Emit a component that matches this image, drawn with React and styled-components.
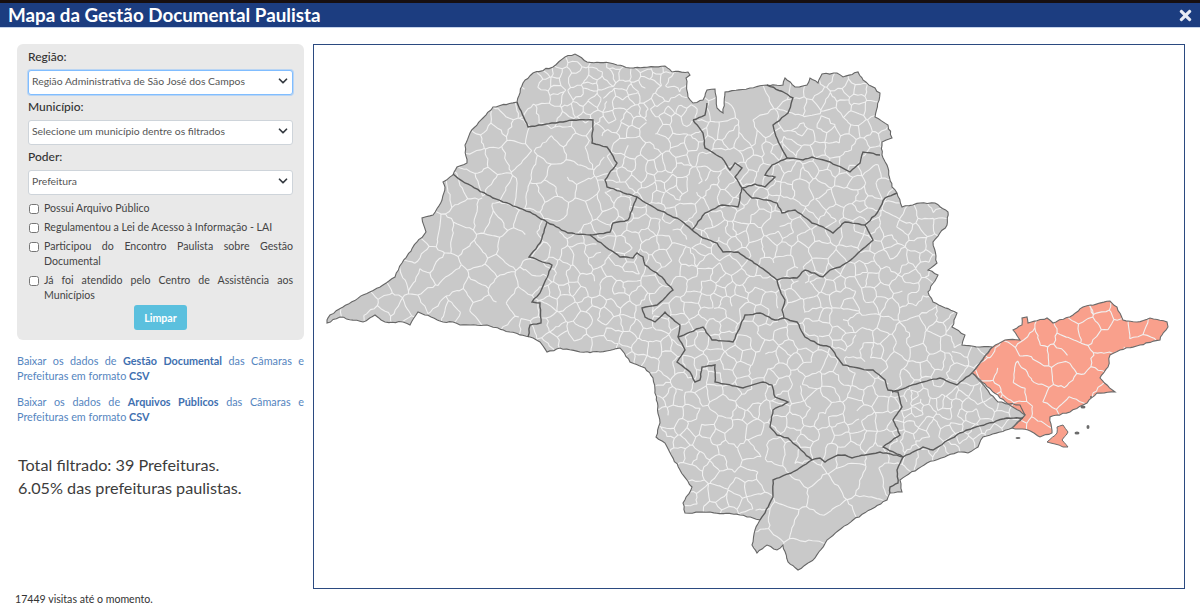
import React from 'react'
import styled, { createGlobalStyle } from 'styled-components'
import { FaTimes } from 'react-icons/fa'
import { ChevronDown } from 'lucide-react'

const GlobalStyle = createGlobalStyle`
  html, body { margin: 0; padding: 0; background: #fff; }
  body { font-family: Lato, "Open Sans", sans-serif; color: #333; }
`

// traced by hand, page coordinates
const STATE = [[327,320],[330,315],[343,307],[363,295],[383,285],[395,277],[402,263],[417,242],[426,232],[422,218],[433,215],[442,200],[445,187],[443,182],[453,175],[457,167],[467,163],[465,145],[470,133],[483,118],[493,107],[517,102],[523,83],[533,73],[553,67],[565,57],[575,54],[587,62],[610,63],[630,68],[665,66],[672,72],[688,72],[690,75],[686,78],[688,97],[693,103],[703,100],[707,90],[715,89],[717,108],[723,113],[725,92],[750,88],[767,85],[783,85],[785,78],[795,87],[807,85],[810,78],[818,83],[822,74],[837,73],[843,77],[858,72],[863,80],[880,93],[875,117],[888,125],[892,138],[882,142],[882,155],[888,168],[892,187],[897,193],[902,207],[920,203],[935,203],[948,212],[947,225],[933,242],[937,263],[928,270],[938,275],[928,292],[933,302],[957,313],[952,327],[965,335],[962,345],[980,347],[992,347],[972,373],[998,402],[1020,405],[1025,415],[1012,428],[983,437],[978,447],[968,453],[958,452],[927,463],[900,480],[902,492],[890,493],[887,500],[853,520],[827,540],[815,558],[798,570],[788,562],[783,545],[777,550],[767,545],[757,553],[752,545],[755,530],[760,520],[740,515],[710,512],[685,513],[683,503],[692,487],[680,470],[665,443],[656,437],[660,423],[655,390],[653,378],[645,368],[630,362],[620,348],[600,352],[580,352],[560,348],[547,352],[540,342],[530,337],[510,332],[487,325],[460,325],[453,322],[443,322],[418,312],[410,325],[403,322],[385,322],[375,315],[363,322],[340,317],[327,323]]

const VALE = [[972,373],[993,347],[1005,340],[1020,340],[1013,330],[1022,325],[1022,318],[1027,317],[1028,323],[1047,318],[1053,323],[1073,315],[1083,307],[1110,301],[1117,307],[1123,320],[1137,322],[1150,318],[1167,322],[1168,327],[1162,335],[1160,340],[1140,345],[1120,350],[1110,355],[1108,367],[1100,378],[1115,392],[1097,393],[1087,403],[1070,412],[1050,417],[1052,433],[1040,437],[1028,430],[1012,428],[1025,415],[1000,398]]

const ILHABELA = [[1057,427],[1063,425],[1068,432],[1062,440],[1068,447],[1063,447],[1055,444],[1047,442],[1057,433]]

const BORDERS = [
  [[453,174],[465,183],[493,198],[530,212],[547,222],[568,233],[590,235],[620,257],[633,258],[637,253],[643,257],[645,265],[662,277],[673,290],[663,300],[657,305],[642,308],[645,317],[655,322],[665,312],[680,325],[678,337],[685,350],[677,362],[690,372],[695,382],[700,380],[702,367],[715,365],[715,382],[743,388],[763,382],[772,385],[775,397],[788,402],[773,410],[770,427],[777,435],[788,438],[812,460],[820,458],[825,462],[838,455],[845,455],[852,458],[865,455],[880,452],[903,457],[923,447],[933,450],[960,433],[973,428],[1007,418],[1023,418]],
  [[517,102],[528,127],[573,120],[593,120],[592,143],[607,147],[617,163],[605,180],[607,187],[637,197],[655,208],[680,220],[692,230],[703,238],[717,243],[723,252],[738,252],[760,267],[777,280],[780,290],[785,300],[782,310],[784,318],[797,322],[805,337],[820,345],[830,347],[843,365],[867,370],[873,370],[885,380],[888,390],[898,392],[902,407],[893,420],[900,435],[883,447],[903,457],[897,470],[898,483],[890,487],[890,493]],
  [[637,197],[628,220],[613,223],[610,232],[590,235]],
  [[547,222],[540,243],[529,257],[552,265],[540,293],[532,302],[540,303],[541,323],[530,325],[528,337]],
  [[693,120],[705,115],[707,103]],
  [[693,120],[703,133],[705,148],[722,158],[730,170],[735,163],[742,168],[735,177],[742,188],[738,207],[722,205],[705,213],[692,230]],
  [[678,337],[703,327],[712,340],[733,342],[745,315],[760,313],[775,320],[784,318]],
  [[742,188],[755,184],[765,187],[775,177],[765,175],[772,165],[787,158],[780,145],[775,133],[773,125],[788,113],[793,98],[785,93],[767,85]],
  [[787,158],[803,160],[812,157],[830,162],[850,172],[860,163],[863,152],[880,155]],
  [[742,188],[752,198],[767,200],[777,203],[782,213],[795,210],[812,223],[823,227],[833,233],[845,222],[865,225],[873,240],[853,258],[840,267],[830,270],[823,277],[805,270],[797,278],[783,278],[777,280]],
  [[865,225],[877,213],[885,198],[897,193]],
  [[760,520],[765,513],[773,497],[773,480],[797,470],[812,460]],
  [[892,392],[923,382],[940,378],[957,385],[972,373]],
]

const ISLETS = [[1077,433,2.5,1.5],[1088,427,1.5,2],[1018,438,2.5,1],[1083,407,2.5,1.5],[1091,397,1,1]]

const mulberry = (seed) => () => {
  seed = (seed + 0x6d2b79f5) | 0
  let t = Math.imul(seed ^ (seed >>> 15), 1 | seed)
  t = (t + Math.imul(t ^ (t >>> 7), 61 | t)) ^ t
  return ((t ^ (t >>> 14)) >>> 0) / 4294967296
}

const inside = (pt, poly) => {
  let hit = false
  for (let i = 0, j = poly.length - 1; i < poly.length; j = i++) {
    const [xi, yi] = poly[i]
    const [xj, yj] = poly[j]
    if (yi > pt[1] !== yj > pt[1] && pt[0] < ((xj - xi) * (pt[1] - yi)) / (yj - yi) + xi) hit = !hit
  }
  return hit
}

const isTall = (x, y) => x < 540 || (x < 610 && y > 125 && y < 235)

// how far apart the municipalities sit, by area of the map
const spacing = (x, y) => {
  if (x > 972 && inside([x, y], VALE)) return 16
  if (x > 895 && x < 965 && y > 390 && y < 445) return 6
  if (x > 760 && y > 455) return 27
  if (isTall(x, y)) return 20
  if (x > 525 && x < 700 && y < 130) return 6.5
  if (x > 600 && x < 780 && y > 130 && y < 225) return 9
  if (x > 700 && x < 790 && y < 140) return 24
  return 10
}

const buildSeeds = () => {
  const rnd = mulberry(41)
  const seeds = []
  for (let i = 0; i < 12000; i++) {
    const p = [320 + rnd() * 860, 50 + rnd() * 530]
    if (!inside(p, STATE) && !inside(p, VALE)) continue
    const r = spacing(p[0], p[1]) * (0.7 + rnd() * 0.7)
    const tall = isTall(p[0], p[1])
    const ok = seeds.every((s) => {
      const dx = (s[0] - p[0]) * (tall ? 2.2 : 1)
      const dy = (s[1] - p[1]) * (tall ? 0.6 : 1)
      return dx * dx + dy * dy > r * r
    })
    if (ok) seeds.push(p)
  }
  return seeds
}

const clipCell = (cell, a, b) => {
  const mx = (a[0] + b[0]) / 2
  const my = (a[1] + b[1]) / 2
  const nx = b[0] - a[0]
  const ny = b[1] - a[1]
  const side = (p) => (p[0] - mx) * nx + (p[1] - my) * ny
  const out = []
  for (let i = 0; i < cell.length; i++) {
    const p = cell[i]
    const q = cell[(i + 1) % cell.length]
    const sp = side(p)
    const sq = side(q)
    if (sp <= 0) out.push(p)
    if (sp < 0 !== sq < 0) {
      const t = sp / (sp - sq)
      out.push([p[0] + (q[0] - p[0]) * t, p[1] + (q[1] - p[1]) * t])
    }
  }
  return out
}

const wiggle = (a, b, amount, step) => {
  const rnd = mulberry(Math.round(a[0] * 13 + a[1] * 7 + b[0] * 17 + b[1] * 23))
  const len = Math.hypot(b[0] - a[0], b[1] - a[1])
  const n = Math.max(1, Math.round(len / step))
  const pts = []
  for (let i = 1; i < n; i++) {
    const t = i / n
    pts.push([
      a[0] + (b[0] - a[0]) * t + (rnd() - 0.5) * amount,
      a[1] + (b[1] - a[1]) * t + (rnd() - 0.5) * amount,
    ])
  }
  pts.push(b)
  return pts
}

const roughPath = (pts, closed, amount = 1.3) => {
  const list = closed ? [...pts, pts[0]] : pts
  let d = `M${list[0][0]} ${list[0][1]}`
  for (let i = 1; i < list.length; i++) {
    wiggle(list[i - 1], list[i], amount, 3.5).forEach((p) => {
      d += `L${p[0].toFixed(1)} ${p[1].toFixed(1)}`
    })
  }
  return closed ? d + 'Z' : d
}

const buildMesh = () => {
  const seeds = buildSeeds()
  const seen = new Set()
  const drop = mulberry(7)
  let d = ''
  seeds.forEach((s, i) => {
    let cell = [[300, 30], [1200, 30], [1200, 600], [300, 600]]
    seeds.forEach((o, j) => {
      if (i !== j && Math.abs(o[0] - s[0]) < 150 && Math.abs(o[1] - s[1]) < 150) cell = clipCell(cell, s, o)
    })
    cell.forEach((p, k) => {
      const q = cell[(k + 1) % cell.length]
      const [a, b] = p[0] < q[0] ? [p, q] : [q, p]
      const key = `${a[0].toFixed(1)},${a[1].toFixed(1)},${b[0].toFixed(1)},${b[1].toFixed(1)}`
      if (seen.has(key)) return
      seen.add(key)
      if (drop() < 0.12) return
      d += `M${a[0].toFixed(1)} ${a[1].toFixed(1)}`
      wiggle(a, b, 2.4, 4).forEach((w) => {
        d += `L${w[0].toFixed(1)} ${w[1].toFixed(1)}`
      })
    })
  })
  return d
}

const Page = styled.div`
  width: 1200px;
  height: 609px;
  display: flex;
  flex-direction: column;
  overflow: hidden;
`

const TopBar = styled.header`
  box-sizing: border-box;
  height: 28px;
  flex: none;
  display: flex;
  align-items: center;
  justify-content: space-between;
  padding: 0 8px;
  background: #1c3d80;
  border-top: 3px solid #170f10;
  border-bottom: 1px solid #c5d3ea;
`

const Title = styled.h1`
  margin: 0;
  font-size: 18.8px;
  line-height: 24px;
  font-weight: 700;
  color: #fff;
`

const CloseIcon = styled(FaTimes)`
  color: #e6ebf5;
  font-size: 17px;
  margin-right: -2px;
`

const Main = styled.main`
  flex: 1;
  min-height: 0;
  display: flex;
  gap: 9px;
  padding: 16px 16px 0 17px;
`

const Sidebar = styled.aside`
  width: 287px;
  flex: none;
`

const FilterPanel = styled.form`
  box-sizing: border-box;
  height: 296px;
  padding: 5px 11px 0;
  background: #e9e9e9;
  border-radius: 6px;
`

const FieldLabel = styled.label`
  display: block;
  font-size: 12px;
  line-height: 15px;
  font-weight: 500;
  color: #333;
  margin: 0 0 5px;
`

const SelectWrap = styled.div`
  position: relative;
  height: 25px;
  margin-bottom: 5px;
`

const Select = styled.select`
  appearance: none;
  box-sizing: border-box;
  width: 100%;
  height: 25px;
  padding: 0 20px 2px 3px;
  font-family: Lato, sans-serif;
  font-size: 10.4px;
  color: #555;
  background: #fff;
  border-radius: 3px;
  border: 1px solid ${(p) => (p.$focused ? '#80bdff' : '#ced4da')};
  box-shadow: ${(p) => (p.$focused ? '0 0 0 1px rgba(128, 189, 255, 0.45)' : 'none')};
  outline: none;
`

const Chevron = styled(ChevronDown)`
  position: absolute;
  right: 3px;
  top: 5px;
  width: 14px;
  height: 14px;
  color: #343a40;
  stroke-width: 3;
  pointer-events: none;
`

const CheckList = styled.div`
  margin-top: 7px;
  display: flex;
  flex-direction: column;
  gap: 4px;
`

const CheckRow = styled.label`
  display: flex;
  gap: 5px;
  font-size: 10.6px;
  line-height: 15px;
  color: #444;
  text-align: justify;
`

const CheckBox = styled.input.attrs({ type: 'checkbox' })`
  flex: none;
  width: 10px;
  height: 10px;
  margin: 3px 0 0 1px;
`

const ClearRow = styled.div`
  display: flex;
  justify-content: center;
  margin-top: 2px;
`

const ClearButton = styled.button`
  width: 53px;
  height: 25px;
  padding: 0;
  border: 0;
  border-radius: 3px;
  background: #5bc0de;
  color: #fff;
  font-family: Lato, sans-serif;
  font-size: 10.6px;
  font-weight: 700;
`

const Download = styled.a`
  display: block;
  margin-top: ${(p) => p.$gap}px;
  font-size: 10.8px;
  line-height: 15px;
  color: #5585c0;
  text-align: justify;
  & b { color: #3f70b0; }
`

const Totals = styled.p`
  margin: 29px 0 0 1px;
  font-size: 16.2px;
  line-height: 23px;
  color: #3c3c3c;
`

const MapFrame = styled.section`
  box-sizing: border-box;
  width: 872px;
  height: 545px;
  border: 1px solid #2b4a80;
  background: #fff;
`

const MapSvg = styled.svg`
  display: block;
  width: 870px;
  height: 543px;
`

const Footer = styled.footer`
  flex: none;
  height: 21px;
  padding: 4px 0 0 15px;
  box-sizing: border-box;
  font-size: 10.6px;
  line-height: 15px;
  color: #333;
`

const mesh = buildMesh()
const statePath = roughPath(STATE, true)
const valePath = roughPath(VALE, true)
const islandPath = roughPath(ILHABELA, true, 0.8)

const SaoPauloMap = () => (
  <MapSvg viewBox="314 45 870 543">
    <defs>
      <clipPath id="land">
        <path d={statePath} />
        <path d={valePath} />
      </clipPath>
    </defs>
    <path d={statePath} fill="#c9c9c9" />
    <path d={valePath} fill="#f9a08c" />
    <path d={islandPath} fill="#f9a08c" />
    <path d={mesh} fill="none" stroke="#f0f0f0" strokeWidth="1.1" clipPath="url(#land)" />
    <path d={statePath} fill="none" stroke="#666" strokeWidth="1.1" />
    <path d={valePath} fill="none" stroke="#6b6b6b" strokeWidth="1.1" />
    <path d={islandPath} fill="none" stroke="#6b6b6b" strokeWidth="1" />
    {BORDERS.map((line, i) => (
      <path key={i} d={roughPath(line, false, 1)} fill="none" stroke="#5a5a5a" strokeWidth="1.4" />
    ))}
    {ISLETS.map(([cx, cy, rx, ry]) => (
      <ellipse key={cx} cx={cx} cy={cy} rx={rx} ry={ry} fill="#6b6b6b" />
    ))}
  </MapSvg>
)

export default function App() {
  return (
    <Page>
      <GlobalStyle />
      <TopBar>
        <Title>Mapa da Gestão Documental Paulista</Title>
        <CloseIcon />
      </TopBar>
      <Main>
        <Sidebar>
          <FilterPanel>
            <FieldLabel>Região:</FieldLabel>
            <SelectWrap>
              <Select $focused defaultValue="sjc">
                <option value="sjc">Região Administrativa de São José dos Campos</option>
              </Select>
              <Chevron />
            </SelectWrap>
            <FieldLabel>Município:</FieldLabel>
            <SelectWrap>
              <Select defaultValue="">
                <option value="">Selecione um município dentre os filtrados</option>
              </Select>
              <Chevron />
            </SelectWrap>
            <FieldLabel>Poder:</FieldLabel>
            <SelectWrap>
              <Select defaultValue="p">
                <option value="p">Prefeitura</option>
              </Select>
              <Chevron />
            </SelectWrap>
            <CheckList>
              <CheckRow><CheckBox /><span>Possui Arquivo Público</span></CheckRow>
              <CheckRow><CheckBox /><span>Regulamentou a Lei de Acesso à Informação - LAI</span></CheckRow>
              <CheckRow><CheckBox /><span>Participou do Encontro Paulista sobre Gestão Documental</span></CheckRow>
              <CheckRow><CheckBox /><span>Já foi atendido pelo Centro de Assistência aos Municípios</span></CheckRow>
            </CheckList>
            <ClearRow><ClearButton type="button">Limpar</ClearButton></ClearRow>
          </FilterPanel>
          <Download $gap={13}>Baixar os dados de <b>Gestão Documental</b> das Câmaras e Prefeituras em formato <b>CSV</b></Download>
          <Download $gap={11}>Baixar os dados de <b>Arquivos Públicos</b> das Câmaras e Prefeituras em formato <b>CSV</b></Download>
          <Totals>Total filtrado: 39 Prefeituras.<br />6.05% das prefeituras paulistas.</Totals>
        </Sidebar>
        <MapFrame>
          <SaoPauloMap />
        </MapFrame>
      </Main>
      <Footer>17449 visitas até o momento.</Footer>
    </Page>
  )
}
